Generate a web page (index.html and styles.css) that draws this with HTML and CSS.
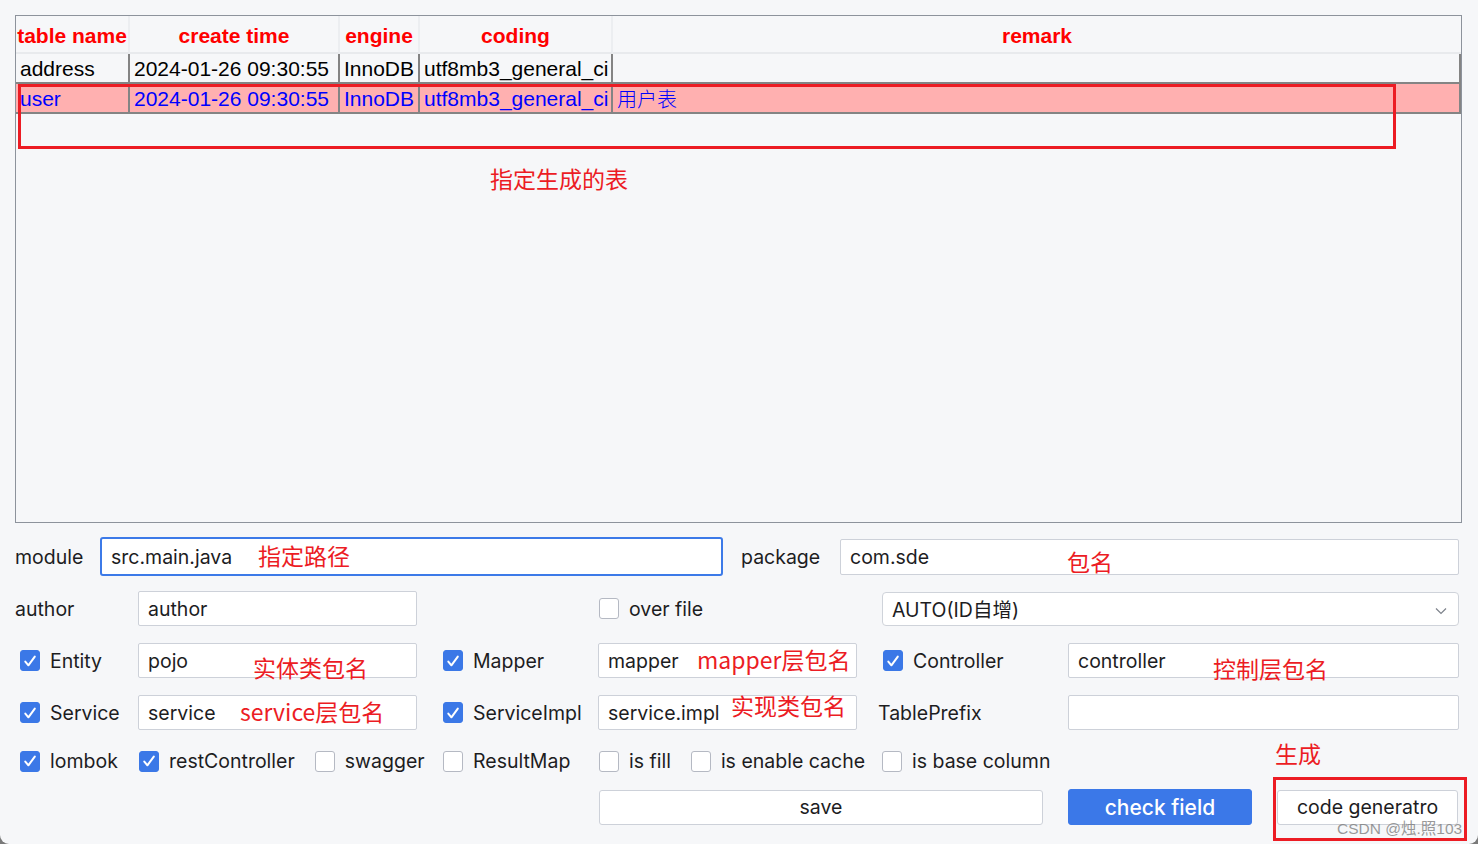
FILE: index.html
```html
<!DOCTYPE html>
<html lang="zh-CN">
<head>
<meta charset="utf-8">
<title>code generator</title>
<link rel="stylesheet" href="styles.css">
</head>
<body>
<div class="window">
  <div class="table-wrap">
    <table class="db-table">
      <colgroup>
        <col class="c1"><col class="c2"><col class="c3"><col class="c4"><col class="c5">
      </colgroup>
      <thead>
        <tr><th>table name</th><th>create time</th><th>engine</th><th>coding</th><th class="last">remark</th></tr>
      </thead>
      <tbody>
        <tr><td>address</td><td>2024-01-26 09:30:55</td><td>InnoDB</td><td>utf8mb3_general_ci</td><td></td></tr>
        <tr class="selected"><td>user</td><td>2024-01-26 09:30:55</td><td>InnoDB</td><td>utf8mb3_general_ci</td><td class="cjk">用户表</td></tr>
      </tbody>
    </table>
    <div class="mark-table"></div>
    <span class="note note-table">指定生成的表</span>
  </div>

  <div class="form-top">
    <span class="lbl lbl-module">module</span>
    <div class="field focus">src.main.java<span class="note n-module">指定路径</span></div>
    <span class="lbl lbl-package">package</span>
    <div class="field pkg">com.sde<span class="note n-pkg">包名</span></div>
  </div>

  <div class="frow">
    <span class="lbl g1">author</span>
    <div class="field g2">author</div>
    <label class="chk g5 p1"><span class="box"></span><span>over file</span></label>
    <div class="select g78">AUTO(ID自增)<svg class="chev" width="12" height="8" viewBox="0 0 12 8"><polyline points="1,1.5 6,6.5 11,1.5" fill="none" stroke="#7d828b" stroke-width="1.2"/></svg></div>
  </div>

  <div class="frow">
    <label class="chk g1 p5"><span class="box on"><svg width="20" height="20" viewBox="0 0 20 20"><path d="M5.3 10.6 L8.4 14.3 L14.8 5.6" fill="none" stroke="#fff" stroke-width="2" stroke-linecap="round" stroke-linejoin="round"/></svg></span><span>Entity</span></label>
    <div class="field g2">pojo<span class="note n-pojo">实体类包名</span></div>
    <label class="chk g4"><span class="box on"><svg width="20" height="20" viewBox="0 0 20 20"><path d="M5.3 10.6 L8.4 14.3 L14.8 5.6" fill="none" stroke="#fff" stroke-width="2" stroke-linecap="round" stroke-linejoin="round"/></svg></span><span>Mapper</span></label>
    <div class="field g5">mapper<span class="note n-mapper">mapper层包名</span></div>
    <label class="chk g7 p1"><span class="box on"><svg width="20" height="20" viewBox="0 0 20 20"><path d="M5.3 10.6 L8.4 14.3 L14.8 5.6" fill="none" stroke="#fff" stroke-width="2" stroke-linecap="round" stroke-linejoin="round"/></svg></span><span>Controller</span></label>
    <div class="field g8">controller<span class="note n-ctrl">控制层包名</span></div>
  </div>

  <div class="frow">
    <label class="chk g1 p5"><span class="box on"><svg width="20" height="20" viewBox="0 0 20 20"><path d="M5.3 10.6 L8.4 14.3 L14.8 5.6" fill="none" stroke="#fff" stroke-width="2" stroke-linecap="round" stroke-linejoin="round"/></svg></span><span>Service</span></label>
    <div class="field g2">service<span class="note n-service">service层包名</span></div>
    <label class="chk g4"><span class="box on"><svg width="20" height="20" viewBox="0 0 20 20"><path d="M5.3 10.6 L8.4 14.3 L14.8 5.6" fill="none" stroke="#fff" stroke-width="2" stroke-linecap="round" stroke-linejoin="round"/></svg></span><span>ServiceImpl</span></label>
    <div class="field g5">service.impl<span class="note n-impl">实现类包名</span></div>
    <span class="lbl g7 lbl-prefix">TablePrefix</span>
    <div class="field g8"></div>
  </div>

  <div class="frow short">
    <label class="chk g1 p5"><span class="box on"><svg width="20" height="20" viewBox="0 0 20 20"><path d="M5.3 10.6 L8.4 14.3 L14.8 5.6" fill="none" stroke="#fff" stroke-width="2" stroke-linecap="round" stroke-linejoin="round"/></svg></span><span>lombok</span></label>
    <div class="chk-group g2 p1">
      <label class="chk"><span class="box on"><svg width="20" height="20" viewBox="0 0 20 20"><path d="M5.3 10.6 L8.4 14.3 L14.8 5.6" fill="none" stroke="#fff" stroke-width="2" stroke-linecap="round" stroke-linejoin="round"/></svg></span><span>restController</span></label>
      <label class="chk"><span class="box"></span><span>swagger</span></label>
    </div>
    <label class="chk g4"><span class="box"></span><span>ResultMap</span></label>
    <div class="chk-group g5 p1">
      <label class="chk"><span class="box"></span><span>is fill</span></label>
      <label class="chk"><span class="box"></span><span>is enable cache</span></label>
    </div>
    <label class="chk g7"><span class="box"></span><span>is base column</span></label>
    <div class="g8 note-cell"><span class="note n-gen">生成</span></div>
  </div>

  <div class="frow last-row">
    <button class="btn btn-save g5">save</button>
    <div class="btn-group g8">
      <button class="btn btn-primary">check field</button>
      <div class="gen-wrap">
        <button class="btn btn-gen">code generatro</button>
        <span class="mark-btn"></span>
      </div>
    </div>
  </div>

  <span class="watermark">CSDN @烛.照103</span>
</div>
</body>
</html>
```

FILE: styles.css
```css
* { box-sizing: border-box; }

html, body {
  margin: 0;
  padding: 0;
}

body {
  background: #7a7a7a;
  width: 1478px;
  height: 844px;
  overflow: hidden;
}

.window {
  position: relative;
  width: 1478px;
  height: 844px;
  background: #f6f7f9;
  border-radius: 0 0 9px 9px;
  padding: 15px 16px 0 15px;
  font-family: "Inter", "Noto Sans CJK SC", sans-serif;
  font-size: 19.5px;
  color: #1d1d1f;
}

/* ---------- table ---------- */
.table-wrap {
  position: relative;
  width: 1447px;
  height: 508px;
  border: 1px solid #8d939c;
  background: #f6f7f9;
  overflow: hidden;
}

.db-table {
  table-layout: fixed;
  border-collapse: separate;
  border-spacing: 0;
  width: 1445px;
  font-family: "Liberation Sans", Arial, "Noto Sans CJK SC", sans-serif;
  font-size: 21px;
}

.c1 { width: 114px; }
.c2 { width: 210px; }
.c3 { width: 80px; }
.c4 { width: 193px; }
.c5 { width: 848px; }

.db-table th {
  color: #ff0000;
  font-weight: bold;
  text-align: center;
  line-height: 32px;
  padding: 4px 0 0 0;
  border-right: 2px solid #eceef1;
  border-bottom: 2px solid #e8eaed;
  white-space: nowrap;
  overflow: hidden;
}

.db-table th.last { border-right: 0; }

.db-table td {
  color: #000;
  line-height: 27px;
  padding: 1px 0 0 4px;
  border-right: 2px solid #848484;
  border-bottom: 2px solid #848484;
  white-space: nowrap;
  overflow: hidden;
}

.db-table tr.selected td {
  background: #ffb0b0;
  color: #0000ff;
}

.db-table td.cjk {
  font-family: "Noto Sans CJK SC", sans-serif;
  font-weight: 300;
  font-size: 20px;
}

.mark-table {
  position: absolute;
  left: 2px;
  top: 68px;
  width: 1378px;
  height: 65px;
  border: 3px solid #ec1c24;
}

/* ---------- annotations ---------- */
.note {
  position: absolute;
  font-family: "Noto Sans CJK SC", sans-serif;
  font-size: 23px;
  line-height: 1;
  color: #ec1c24;
  white-space: nowrap;
}

.note-table { left: 474px; top: 151px; }
.n-module { left: 156px; top: 5px; }
.n-pkg { left: 226px; top: 10px; }
.n-pojo { left: 114px; top: 12px; }
.n-service { left: 101px; top: 4px; }
.n-mapper { left: 98px; top: 4px; }
.n-impl { left: 132px; top: -2px; }
.n-ctrl { left: 144px; top: 13px; }
.n-gen { left: 207px; top: -6px; }

/* ---------- form ---------- */
.form-top {
  display: flex;
  align-items: center;
  height: 39px;
  margin-top: 14px;
}

.lbl { white-space: nowrap; }
.lbl-module { width: 85px; }
.lbl-package { width: 99px; margin-left: 18px; }
.lbl-prefix { margin-left: -4px; }

.field {
  position: relative;
  display: flex;
  align-items: center;
  height: 35px;
  background: #fff;
  border: 1px solid #cdd1d9;
  border-radius: 2px;
  padding: 0 9px;
  white-space: nowrap;
}

.field.focus {
  width: 623px;
  height: 39px;
  border: 2px solid #3c7ae8;
  border-radius: 3px;
}

.field.pkg {
  width: 619px;
  height: 36px;
}

.frow {
  display: grid;
  grid-template-columns: 123px 279px 26px 155px 259px 25px 186px 391px;
  height: 35px;
  align-items: center;
  margin-top: 17px;
}

.form-top + .frow { margin-top: 15px; }

.frow.short { height: 26px; margin-top: 18px; }

.frow.last-row { margin-top: 15px; }

.g1 { grid-column: 1; }
.g2 { grid-column: 2; }
.g4 { grid-column: 4; }
.g5 { grid-column: 5; }
.g7 { grid-column: 7; }
.g8 { grid-column: 8; }
.g78 { grid-column: 7 / span 2; }

.p1 { padding-left: 1px; }
.p5 { padding-left: 5px; }

.chk {
  display: inline-flex;
  align-items: center;
  gap: 10px;
  white-space: nowrap;
}

.chk-group {
  display: flex;
  align-items: center;
  gap: 20px;
}

.box {
  display: inline-flex;
  width: 20px;
  height: 21px;
  flex: none;
  background: #fff;
  border: 1.5px solid #b5b9c3;
  border-radius: 3px;
}

.box.on {
  background: #3b78e7;
  border-color: #3b78e7;
  align-items: center;
  justify-content: center;
}

.box.on svg { display: block; margin: -1.5px; }

.select {
  position: relative;
  display: flex;
  align-items: center;
  height: 34px;
  background: #fff;
  border: 1px solid #cfd3da;
  border-radius: 4px;
  padding: 0 9px;
  font-family: "Inter", "Noto Sans CJK SC", sans-serif;
}

.chev {
  position: absolute;
  right: 11px;
  top: 14px;
}

.note-cell {
  position: relative;
  height: 26px;
}

.btn {
  font-family: "Inter", sans-serif;
  font-size: 19.5px;
  color: #1d1d1f;
  height: 35px;
  background: #fff;
  border: 1px solid #cdd1d9;
  border-radius: 3px;
  padding: 0;
}

.btn-save {
  width: 444px;
  justify-self: start;
  margin-left: 1px;
}

.btn-group {
  display: flex;
  align-items: center;
  gap: 25px;
}

.btn-primary {
  width: 184px;
  height: 36px;
  background: #3b78e8;
  border-color: #3b78e8;
  color: #fff;
  font-size: 21px;
  font-weight: 500;
}

.gen-wrap {
  position: relative;
  width: 181px;
}

.btn-gen {
  width: 181px;
}

.mark-btn {
  position: absolute;
  left: -4px;
  right: -9px;
  top: -13px;
  bottom: -16px;
  border: 3px solid #ec1c24;
}

.watermark {
  position: absolute;
  left: 1337px;
  top: 816px;
  font-family: "Liberation Sans", "Noto Sans CJK SC", sans-serif;
  font-size: 15.5px;
  color: rgba(120, 120, 120, 0.75);
  white-space: nowrap;
}
```
